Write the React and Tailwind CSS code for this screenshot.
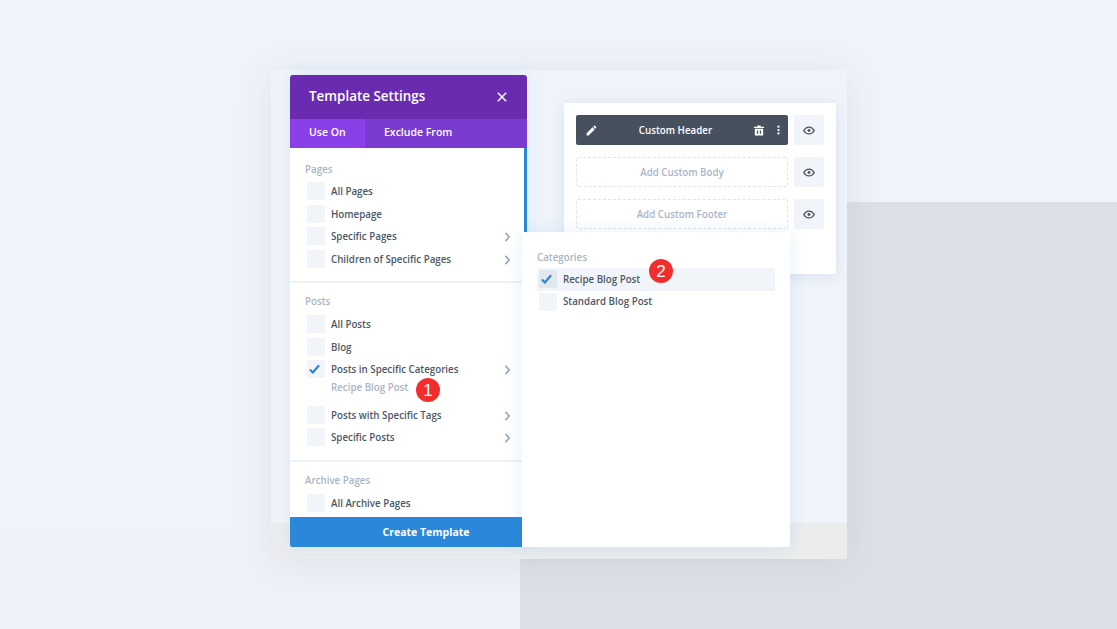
const EyeIcon = () => (
  <svg viewBox="0 0 14 10" className="w-[12px] h-[9px] fill-none stroke-[#4c5866] stroke-[1.6]">
    <path d="M0.900 5C2.300 2.400 4.400 1 7 1s4.700 1.400 6.100 4C11.700 7.600 9.600 9 7 9S2.300 7.600 0.900 5z" />
    <circle cx="7" cy="5" r="1.700" className="fill-[#4c5866] stroke-none" />
  </svg>
);

const Chevron = () => (
  <svg viewBox="0 0 8 12" className="w-[7px] h-[10px] fill-none stroke-[#9aa8ba] stroke-[2]">
    <path d="M1.500 1l4.500 5-4.500 5" />
  </svg>
);

const Check = () => (
  <svg viewBox="0 0 12 10" className="w-[11px] h-[10px] mr-[3px] fill-none stroke-[#2b87da] stroke-[2.4]">
    <path d="M1 5.500l3.200 3.300L11 1" />
  </svg>
);

const Box = ({ checked, dark, className = "" }) => (
  <span className={`flex items-center justify-center w-[18px] h-[18px] shrink-0 rounded-[2px] ${dark ? "bg-[#e3e7ee]" : "bg-[#f1f4f9]"} ${className}`}>
    {checked && <Check />}
  </span>
);

const Row = ({ label, checked, more }) => (
  <div className="flex items-center h-[22.5px] pl-[17px] pr-[13px]">
    <Box checked={checked} className="mb-[2px]" />
    <span className="ml-[6px] flex-1 pt-[1px] text-[9.75px] font-semibold text-[#4c5866] whitespace-nowrap">{label}</span>
    {more && <Chevron />}
  </div>
);

const SectionLabel = ({ children }) => (
  <div className="h-[14px] leading-[14px] text-[9.75px] font-semibold text-[#a9b5c6]">{children}</div>
);

const Slot = ({ children }) => (
  <div className="flex gap-[6px] h-[30px]">
    <div className="flex-1 flex items-center justify-center rounded-[2px] border border-dashed border-[#dde5f0] pt-[2px] text-[9.75px] font-semibold text-[#a9b5c6]">
      {children}
    </div>
    <div className="flex items-center justify-center w-[30px] bg-[#f1f4f9] rounded-[2px]"><EyeIcon /></div>
  </div>
);

const Badge = ({ n, className }) => (
  <span className={`absolute flex items-center justify-center w-[24px] h-[24px] rounded-full bg-[#f32d2d] text-white text-[17px] leading-none font-['Liberation_Sans',sans-serif] ${className}`}>{n}</span>
);

export default function App() {
  return (
    <div className="relative w-[1117px] h-[629px] overflow-hidden bg-gradient-to-b from-[#eff3fb] from-80% to-[#eef1f8] font-['Open_Sans',sans-serif]">
      <div className="absolute left-[520px] top-[202px] right-0 bottom-0 bg-[#dde0e8]" />

      <div className="relative ml-[271px] pt-[70px] w-[576px]">
        <div className="relative h-[489px] bg-[#f0f4fa] shadow-[0_4px_36px_rgba(70,75,90,0.09)] flex items-start">
          <div className="absolute left-0 right-0 bottom-0 h-[36px] bg-[#ebeced]" />

          {/* Settings panel */}
          <div className="relative ml-[19px] mt-[5px] w-[237px] shrink-0 shadow-[0_0_14px_rgba(43,135,218,0.10)]">
            <div className="flex items-center justify-between h-[44px] pb-[1px] pl-[19px] pr-[20px] bg-[#6b2bb0] rounded-t-[3px] text-white">
              <span className="text-[13.4px] font-semibold">Template Settings</span>
              <svg viewBox="0 0 12 12" className="w-[10px] h-[10px] stroke-white stroke-[1.8] fill-none">
                <path d="M1 1l10 10M11 1L1 11" />
              </svg>
            </div>
            <div className="flex h-[29px] bg-[#7b3ad0] text-white text-[10.5px] font-semibold">
              <div className="flex items-center w-[75px] pl-[19px] pb-[1px] bg-[#8b3fe8]">Use On</div>
              <div className="flex items-center pl-[19px] pb-[1px]">Exclude From</div>
            </div>
            <div className="h-[369px] overflow-hidden bg-white border-r-[3px] border-[#2b87da]">
              <div className="pt-[15px] pb-[10px] border-b-2 border-[#eef1f6]">
                <div className="pl-[15px] mb-[4px]"><SectionLabel>Pages</SectionLabel></div>
                <Row label="All Pages" />
                <Row label="Homepage" />
                <Row label="Specific Pages" more />
                <Row label="Children of Specific Pages" more />
              </div>
              <div className="pt-[12px] pb-[10px] border-b-2 border-[#eef1f6]">
                <div className="pl-[15px] mb-[5px]"><SectionLabel>Posts</SectionLabel></div>
                <Row label="All Posts" />
                <Row label="Blog" />
                <Row label="Posts in Specific Categories" checked more />
                <div className="h-[24px] -mt-[1px] pl-[41px] text-[9.75px] leading-[14px] font-semibold text-[#a9b5c6]">Recipe Blog Post</div>
                <Row label="Posts with Specific Tags" more />
                <Row label="Specific Posts" more />
              </div>
              <div className="pt-[12px]">
                <div className="pl-[15px] mb-[5px]"><SectionLabel>Archive Pages</SectionLabel></div>
                <Row label="All Archive Pages" />
              </div>
            </div>
            <div className="flex items-center justify-center h-[30px] pl-[35px] pt-[1px] bg-[#2b87da] rounded-b-[2px] text-white text-[10.5px] font-bold">Create Template</div>
            <Badge n="1" className="left-[126px] top-[303px]" />
          </div>

          {/* Layout card */}
          <div className="relative ml-[37px] mt-[33px] w-[272px] h-[171px] shrink-0 bg-white rounded-[2px] shadow-[0_2px_14px_rgba(43,87,151,0.12)] pl-[12px] pr-[12px] pt-[12px] flex flex-col gap-[12px]">
            <div className="flex gap-[6px] h-[30px]">
              <div className="flex-1 flex items-center justify-between pl-[9px] pr-[8px] bg-[#47515e] rounded-[2px] text-white">
                <svg viewBox="0 0 24 24" className="w-[13px] h-[13px] fill-white">
                  <path d="M3 17.250V21h3.750L17.810 9.940l-3.750-3.750L3 17.250zM20.710 7.040c.39-.39.39-1.020 0-1.410l-2.340-2.340c-.39-.39-1.020-.39-1.410 0l-1.830 1.830 3.750 3.750 1.830-1.830z" />
                </svg>
                <span className="text-[9.75px] font-semibold -ml-[1px] pt-[2px]">Custom Header</span>
                <div className="flex items-center gap-[13px]">
                  <svg viewBox="0 0 12 12" className="w-[10px] h-[11px] fill-white">
                    <path d="M4 0h4v1.500h4V3H0V1.500h4zM1 4h10v7a1 1 0 0 1-1 1H2a1 1 0 0 1-1-1zm2.500 2v4H5V6zm3.500 0v4h1.500V6z" />
                  </svg>
                  <svg viewBox="0 0 4 12" className="w-[3px] h-[10px] fill-white">
                    <circle cx="2" cy="1.500" r="1.500" />
                    <circle cx="2" cy="6" r="1.500" />
                    <circle cx="2" cy="10.500" r="1.500" />
                  </svg>
                </div>
              </div>
              <div className="flex items-center justify-center w-[30px] bg-[#f1f4f9] rounded-[2px]"><EyeIcon /></div>
            </div>
            <Slot>Add Custom Body</Slot>
            <Slot>Add Custom Footer</Slot>
          </div>

          {/* Categories popup */}
          <div className="absolute left-[251px] top-[162px] w-[268px] h-[315px] bg-white rounded-r-[3px] shadow-[0_0_18px_rgba(43,135,218,0.12)] pt-[19px] pl-[15px] pr-[15px]">
            <div className="mb-[3px]"><SectionLabel>Categories</SectionLabel></div>
            <div className="flex items-center h-[22.5px] pl-[2px] bg-[#f1f4f9]">
              <Box checked dark />
              <span className="ml-[6px] pt-[2px] text-[9.75px] font-semibold text-[#4c5866]">Recipe Blog Post</span>
            </div>
            <div className="flex items-center h-[22.5px] pl-[2px]">
              <Box />
              <span className="ml-[6px] pt-[1px] text-[9.75px] font-semibold text-[#4c5866]">Standard Blog Post</span>
            </div>
            <Badge n="2" className="left-[127px] top-[27px]" />
          </div>
        </div>
      </div>
    </div>
  );
}
